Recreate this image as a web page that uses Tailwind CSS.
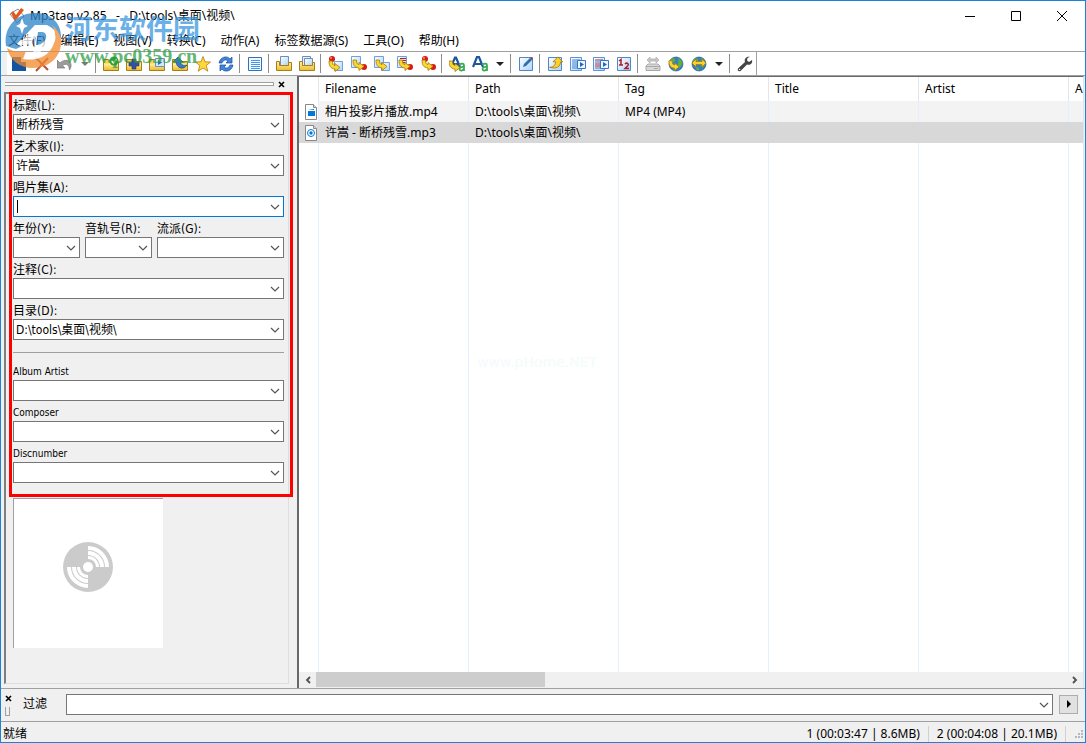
<!DOCTYPE html>
<html lang="zh-CN">
<head>
<meta charset="utf-8">
<title>Mp3tag v2.85</title>
<script src="https://cdn.jsdelivr.net/npm/@tailwindcss/browser@4"></script>
</head>
<body class="h-screen overflow-hidden bg-white font-['Noto_Sans','Noto_Sans_CJK_SC',sans-serif] text-xs text-black">
<svg class="absolute h-0 w-0" aria-hidden="true">
  <defs>
    <linearGradient id="gold" x1="0" y1="0" x2="0" y2="1"><stop offset="0" stop-color="#fff2ac"/><stop offset="1" stop-color="#edbd2c"/></linearGradient>
    <linearGradient id="page" x1="0" y1="0" x2="1" y2="1"><stop offset="0" stop-color="#fff"/><stop offset="1" stop-color="#aed3f8"/></linearGradient>
    <symbol id="chev" viewBox="0 0 10 6"><path d="M1 1l4 4 4-4" fill="none" stroke="#555" stroke-width="1.2"/></symbol>
    <symbol id="folder" viewBox="0 0 16 16"><path d="M.5 14.500V3.500h5l1.500 2h8.500v9z" fill="#f3cf4c" stroke="#a77e12"/><path d="M1 14V7.500h14V14z" fill="url(#gold)"/></symbol>
    <symbol id="doc" viewBox="0 0 16 16"><path d="M1.500 .5h9v11h-9z" fill="url(#page)" stroke="#6f9fdc"/></symbol>
    <symbol id="sheet" viewBox="0 0 16 16"><path d="M1.500 1.500h13v13h-13z" fill="url(#page)" stroke="#4d87cf"/></symbol>
    <symbol id="hook" viewBox="0 0 16 16"><path d="M1 4c0 5 1.500 7.500 6 8v2.500L12 10.500 7 6.500v2C5 8.300 4.500 7 4.500 4z" fill="#fbd62e" stroke="#a57908" stroke-width=".8"/></symbol>
    <symbol id="dot" viewBox="0 0 16 16"><circle cx="8" cy="8" r="3" fill="#d81a10"/><circle cx="7" cy="7" r="1" fill="#f58a7c"/></symbol>
    <symbol id="globe" viewBox="0 0 16 16"><circle cx="8" cy="8" r="7" fill="#347fc8" stroke="#1a4b86" stroke-width=".6"/><path d="M3 3c3-2 5 0 4 2s-3 1-4 4c-2-1-1.500-4 0-6zM10 2c3 1 4 3 4.500 6l-3 4-2-3 1-3zM5 11l3 1v2.500c-2 0-3-1-3-3.500z" fill="#5eaf3d"/></symbol>
    <symbol id="file" viewBox="0 0 12 16"><path d="M.5.5h8l3 3v12H.5z" fill="#fff" stroke="#888"/><path d="M8.500.5v3h3" fill="#ddd" stroke="#888"/></symbol>
    <symbol id="drop" viewBox="0 0 8 4"><path d="M0 0h8L4 4z" fill="#222"/></symbol>
  </defs>
</svg>

<div class="relative flex h-full flex-col border border-[#1883d7]">
  <header class="flex h-[29px] shrink-0 items-center pl-2">
    <svg class="h-4 w-4" viewBox="0 0 16 16"><path d="M1 6l7 9 7-7-6-7z" fill="#fff" stroke="#888"/><path d="M2 5l4 8L15 2l-3-2-5 7-3-4z" fill="#e4571c"/></svg>
    <h1 class="ml-[5px] flex-1 whitespace-pre">Mp3tag v2.85   -   D:\tools\桌面\视频\</h1>
    <button aria-label="最小化" class="flex h-full w-[46px] items-center justify-center"><svg class="h-3 w-3" viewBox="0 0 12 12"><path d="M1 6.500h10" stroke="#000"/></svg></button>
    <button aria-label="最大化" class="flex h-full w-[46px] items-center justify-center"><svg class="h-3 w-3" viewBox="0 0 12 12"><path d="M1.500 1.500h9v9h-9z" fill="none" stroke="#000"/></svg></button>
    <button aria-label="关闭" class="flex h-full w-[46px] items-center justify-center"><svg class="h-3 w-3" viewBox="0 0 12 12"><path d="M1 1l10 10M11 1L1 11" stroke="#000"/></svg></button>
  </header>
  <nav class="flex h-[21px] shrink-0 items-center gap-[15px] pl-[7px]">
    <button>文件(F)</button><button>编辑(E)</button><button>视图(V)</button><button>转换(C)</button><button>动作(A)</button><button>标签数据源(S)</button><button>工具(O)</button><button>帮助(H)</button>
  </nav>
  <div class="flex h-[25px] shrink-0 items-stretch border-y border-[#a0a0a0] [&>button]:flex [&>button]:w-[23px] [&>button]:items-center [&>button]:justify-center [&>i]:mx-[2px] [&>i]:my-[2px] [&>i]:w-[2px] [&>i]:border-l [&>i]:border-[#8d8d8d] [&_svg]:h-4 [&_svg]:w-4">
    <span class="w-[6px] bg-[#f0f0f0]"></span>
    <button aria-label="保存"><svg viewBox="0 0 16 16"><path d="M1 1h9v5h5v9H1z" fill="#1453a0"/></svg></button>
    <button aria-label="删除"><svg viewBox="0 0 16 16"><path d="M2 2l12 12M14 2L2 15" stroke="#b5523f" stroke-width="2"/></svg></button>
    <button aria-label="撤消"><svg viewBox="0 0 16 16"><path d="M0 4v8h8L5.500 9.500C9 7 12 8 12.500 14c5-8-3-13-9.500-7z" fill="#9b9b9b" stroke="#777" stroke-width=".7"/></svg></button>
    <button aria-label="撤消列表" class="!w-[17px]"><svg class="!h-1 !w-2 opacity-60"><use href="#drop"/></svg></button><i></i>
    <button aria-label="更改目录"><svg viewBox="0 0 16 16"><use href="#folder"/><circle cx="11" cy="5" r="4.500" fill="#2aa52e"/><path d="M8.500 5l2 2 3-4" fill="none" stroke="#fff" stroke-width="1.500"/></svg></button>
    <button aria-label="添加目录"><svg viewBox="0 0 16 16"><use href="#folder"/><path d="M6 3h4v3h3v4h-3v3H6v-3H3V6h3z" fill="#37509b" stroke="#23346b" stroke-width=".6"/></svg></button>
    <button aria-label="收藏目录"><svg viewBox="0 0 16 16"><use href="#folder"/><path d="M6.500 2.500h9v8h-9z" fill="#d3e7fc" stroke="#5e92d2"/><path d="M9 4l4 2.500L9 9z" fill="#2669bc"/></svg></button>
    <button aria-label="上级目录"><svg viewBox="0 0 16 16"><use href="#folder"/><path d="M6 1l5 5H8.500c.5 3 3 4 6.500 3-3 5-10 4-11-3H1z" fill="#3878c9" stroke="#1a4788" stroke-width=".7"/></svg></button>
    <button aria-label="收藏"><svg viewBox="0 0 16 16"><path d="M8 .5l2 5.300 5.500.2-4.300 3.600 1.600 5.600L8 12l-4.800 3.200 1.600-5.600L.5 6l5.500-.2z" fill="#ffd839" stroke="#b17a10" stroke-width=".8"/></svg></button>
    <button aria-label="刷新"><svg viewBox="0 0 16 16"><path d="M1 7c1-6 8-8 11-4l2-2v6H8l2-2C8 3 5 4 4 7zM15 9c-1 6-8 8-11 4l-2 2V9h6l-2 2c2 2 5 1 6-2z" fill="#3f86dc" stroke="#174e9b" stroke-width=".7"/></svg></button><i></i>
    <button aria-label="扩展标签"><svg viewBox="0 0 16 16"><path d="M1.500 1.500h13v13h-13z" fill="#f0f7ff" stroke="#2c73c4"/><path d="M4 4.500h9M4 6.500h9M4 8.500h9M4 10.500h9M4 12.500h9" stroke="#4795e8"/></svg></button><i></i>
    <button aria-label="打开文件"><svg viewBox="0 0 16 16"><path d="M4.500.5h8v9h-8z" fill="url(#page)" stroke="#6f8db8"/><path d="M.5 5.500h3v4h9v-3h3v8H.5z" fill="url(#gold)" stroke="#a77e12"/></svg></button>
    <button aria-label="打开播放列表"><svg viewBox="0 0 16 16"><path d="M3.500.5h8v9h-8z" fill="#e8f2fe" stroke="#6f8db8"/><path d="M5.500 2.500h8v7h-8z" fill="url(#page)" stroke="#6f8db8"/><path d="M.5 5.500h3v4h10v-3h2v8H.5z" fill="url(#gold)" stroke="#a77e12"/></svg></button><i></i>
    <button aria-label="标签到文件名"><svg viewBox="0 0 16 16"><path d="M6.500 5.500h8v9h-8z" fill="url(#page)" stroke="#6f9fdc"/><use href="#dot" x="-4" y="-5" width="16" height="16"/><use href="#hook" y="1" width="16" height="16"/></svg></button>
    <button aria-label="文件名到标签"><svg viewBox="0 0 16 16"><use href="#doc" x="-1"/><use href="#dot" x="5" y="3" width="16" height="16"/><use href="#hook" x="1" width="16" height="16"/></svg></button>
    <button aria-label="文件名到文件名"><svg viewBox="0 0 16 16"><use href="#doc" x="-1"/><path d="M7.500 6.500h8v8h-8z" fill="url(#page)" stroke="#6f9fdc"/><use href="#hook" x="1" width="16" height="16"/></svg></button>
    <button aria-label="文本文件到标签"><svg viewBox="0 0 16 16"><use href="#doc" x="-1"/><path d="M3 2.500h6M3 4.500h6M3 6.500h5" stroke="#b52020"/><use href="#dot" x="5" y="3" width="16" height="16"/><use href="#hook" x="1" width="16" height="16"/></svg></button>
    <button aria-label="标签到标签"><svg viewBox="0 0 16 16"><use href="#dot" x="-3" y="-5" width="16" height="16"/><use href="#dot" x="5" y="3" width="16" height="16"/><use href="#hook" x="1" width="16" height="16"/></svg></button><i></i>
    <button aria-label="动作"><svg viewBox="0 0 16 16"><path d="M2 11L6 1.500h1L11 11M4 8h5" fill="none" stroke="#1e559f" stroke-width="2.200"/><path d="M10 8.500q5-2 5 1V15M15 11c-5-1-6 4-2 3.500l2-1.500" fill="none" stroke="#35ad54" stroke-width="1.800"/><use href="#hook" x="-1" y="1" width="16" height="16"/></svg></button>
    <button aria-label="快速动作"><svg viewBox="0 0 16 16"><path d="M1 11L5 1h2l4 10M3 8h6" fill="none" stroke="#1e559f" stroke-width="2.200"/><path d="M10 8.500q5-2 5 1V15M15 11c-5-1-6 4-2 3.500l2-1.500" fill="none" stroke="#35ad54" stroke-width="1.800"/></svg></button>
    <button aria-label="动作列表" class="!w-[17px]"><svg class="!h-1 !w-2"><use href="#drop"/></svg></button><i></i>
    <button aria-label="编辑标签"><svg viewBox="0 0 16 16"><use href="#sheet"/><path d="M5 11l1-3 6-6 2 2-6 6z" fill="#2b6fb7"/><path d="M12 2l1-1 2 2-1 1z" fill="#b82b2b"/></svg></button><i></i>
    <button aria-label="导出"><svg viewBox="0 0 16 16"><use href="#sheet"/><path d="M11 .8l4.700 5H13.500c0 5-4 7.500-11 5.500 4 0 6-2 6-5.500H6z" fill="#fbd02b" stroke="#a57908" stroke-width=".8"/></svg></button>
    <button aria-label="创建播放列表"><svg viewBox="0 0 16 16"><path d="M.5 1.500h11v13H.5z" fill="url(#page)" stroke="#5b94da"/><path d="M2 4h8M2 6h8M2 8h8M2 10h8M2 12h8" stroke="#4284d1"/><path d="M7.500 4.500h8v8h-8z" fill="#eef6ff" stroke="#3976c4"/><path d="M10 6l4 2.500-4 2.500z" fill="#2669bc"/></svg></button>
    <button aria-label="所选文件播放列表"><svg viewBox="0 0 16 16"><path d="M.5 1.500h11v13H.5z" fill="url(#page)" stroke="#5b94da"/><path d="M2 4h8M2 8h8M2 10h8" stroke="#b92d36"/><path d="M2 6h8M2 12h8" stroke="#4284d1"/><path d="M7.500 4.500h8v8h-8z" fill="#eef6ff" stroke="#3976c4"/><path d="M10 6l4 2.500-4 2.500z" fill="#2669bc"/></svg></button>
    <button aria-label="自动编号"><svg viewBox="0 0 16 16"><use href="#sheet"/><path d="M3 5l2-1.500V9M3 9h4" fill="none" stroke="#ae1b25" stroke-width="1.500"/><path d="M9 8c2-2 4 0 3 1.500L9 12.500h4" fill="none" stroke="#ae1b25" stroke-width="1.500"/></svg></button><i></i>
    <button aria-label="光盘识别"><svg viewBox="0 0 16 16"><path d="M1 10l2-2h10l2 2v4.500H1z" fill="#d8d8d8" stroke="#a8a8a8"/><path d="M1 10.500h14M9 12.500h4" stroke="#a8a8a8"/><path d="M2 4l3-3v2h6V1l3 3-3 3V5H5v2z" fill="#c8c8c8" stroke="#aaa" stroke-width=".7"/></svg></button>
    <button aria-label="网络标签源"><svg viewBox="0 0 16 16"><use href="#globe"/><use href="#hook" x="0" y="1" width="15" height="15"/></svg></button>
    <button aria-label="标签源"><svg viewBox="0 0 16 16"><use href="#globe"/><path d="M1 7l4-4v2.500h6V3l4 4-4 4V8.500H5V11z" fill="#fbd02b" stroke="#a57908" stroke-width=".7"/></svg></button>
    <button aria-label="标签源列表" class="!w-[17px]"><svg class="!h-1 !w-2"><use href="#drop"/></svg></button><i></i>
    <button aria-label="选项"><svg viewBox="0 0 16 16"><path d="M15 4l-3 2-2-1.500.5-2.500L13 .8C9 0 7 3 8 6l-7 6.500c-1 2 1 3.500 2.500 2.500L10 8.500c3 1 6-1 5-4.500z" fill="#444"/><circle cx="2.600" cy="13.400" r=".7" fill="#fff"/></svg></button>
    <span class="border-l border-[#a0a0a0]"></span>
  </div>

  <main class="flex min-h-0 flex-1 bg-[#f0f0f0]">
    <aside class="flex w-[296px] shrink-0 flex-col pl-[3px] pr-2">
      <div class="flex h-4 shrink-0 items-center">
        <span class="ml-px h-1 flex-1 border-y border-r border-[#a0a0a0] bg-white"></span>
        <button aria-label="关闭面板" class="flex h-3 w-[15px] items-center justify-center"><svg class="h-[7px] w-[7px]" viewBox="0 0 7 7"><path d="M1 1l5 5M6 1L1 6" stroke="#000" stroke-width="1.600"/></svg></button>
      </div>
      <form class="relative mb-1 flex-1 border-2 border-b border-r border-[#808080] border-b-[#dedede] border-r-[#dedede] pl-[7px] pr-1 font-['DejaVu_Sans_Condensed','Noto_Sans_CJK_SC',sans-serif] text-xs [&_label]:block [&_label]:h-5 [&_label]:whitespace-nowrap [&_label]:pt-1 [&_label]:leading-4 [&_select]:block [&_select]:h-[21px] [&_select]:w-full [&_select]:appearance-none [&_select]:border [&_select]:border-[#767676] [&_select]:bg-white [&_select]:pl-[2px] [&_svg]:pointer-events-none">
        <label for="t">标题(L):</label>
        <div class="relative"><select id="t"><option>断桥残雪</option></select><svg class="absolute right-1 top-2 h-[6px] w-[10px]"><use href="#chev"/></svg></div>
        <label for="ar">艺术家(I):</label>
        <div class="relative"><select id="ar"><option>许嵩</option></select><svg class="absolute right-1 top-2 h-[6px] w-[10px]"><use href="#chev"/></svg></div>
        <label for="al">唱片集(A):</label>
        <div class="relative"><select id="al" class="!border-[#0078d7]"><option></option></select><span class="absolute left-1 top-1 h-[13px] w-px bg-black"></span><svg class="absolute right-1 top-2 h-[6px] w-[10px]"><use href="#chev"/></svg></div>
        <div class="grid grid-cols-[67px_67px_1fr] gap-x-[5px]">
          <div><label for="y">年份(Y):</label><div class="relative"><select id="y"><option></option></select><svg class="absolute right-1 top-2 h-[6px] w-[10px]"><use href="#chev"/></svg></div></div>
          <div><label for="tr">音轨号(R):</label><div class="relative"><select id="tr"><option></option></select><svg class="absolute right-1 top-2 h-[6px] w-[10px]"><use href="#chev"/></svg></div></div>
          <div><label for="g">流派(G):</label><div class="relative"><select id="g"><option></option></select><svg class="absolute right-1 top-2 h-[6px] w-[10px]"><use href="#chev"/></svg></div></div>
        </div>
        <label for="c">注释(C):</label>
        <div class="relative"><select id="c"><option></option></select><svg class="absolute right-1 top-2 h-[6px] w-[10px]"><use href="#chev"/></svg></div>
        <label for="d">目录(D):</label>
        <div class="relative"><select id="d"><option>D:\tools\桌面\视频\</option></select><svg class="absolute right-1 top-2 h-[6px] w-[10px]"><use href="#chev"/></svg></div>
        <hr class="mb-[7px] mt-3 border-[#a0a0a0]">
        <label for="aa" class="text-[10px]">Album Artist</label>
        <div class="relative"><select id="aa"><option></option></select><svg class="absolute right-1 top-2 h-[6px] w-[10px]"><use href="#chev"/></svg></div>
        <label for="co" class="text-[10px]">Composer</label>
        <div class="relative"><select id="co"><option></option></select><svg class="absolute right-1 top-2 h-[6px] w-[10px]"><use href="#chev"/></svg></div>
        <label for="di" class="text-[10px]">Discnumber</label>
        <div class="relative"><select id="di"><option></option></select><svg class="absolute right-1 top-2 h-[6px] w-[10px]"><use href="#chev"/></svg></div>
        <div class="mt-[15px] flex h-[150px] w-[150px] items-center justify-center border-l border-t border-[#a0a0a0] bg-white">
          <svg class="mb-[14px] mr-[2px] h-[52px] w-[52px]" viewBox="0 0 52 52"><circle cx="26" cy="26" r="25" fill="#cbcbcb"/><g fill="none" stroke="#fff" stroke-width="4"><path d="M26 7a19 19 0 0 1 19 19M26 12a14 14 0 0 1 14 14M26 17a9 9 0 0 1 9 9M26 45A19 19 0 0 1 7 26M26 40a14 14 0 0 1-14-14M26 35a9 9 0 0 1-9-9"/></g><circle cx="26" cy="26" r="8" fill="#cbcbcb"/><circle cx="26" cy="26" r="5" fill="#fff"/></svg>
        </div>
        <div class="pointer-events-none absolute -right-[5px] -top-[2px] left-[3px] h-[405px] border-[3px] border-[#f00]"></div>
      </form>
    </aside>

    <section class="relative mr-px flex min-w-0 flex-1 flex-col border-l-2 border-r border-t border-[#696969] border-r-[#e3e3e3] bg-white">
      <div class="min-h-0 flex-1 overflow-hidden">
        <table class="h-full w-full table-fixed border-separate border-spacing-0 text-left whitespace-nowrap [&_td]:overflow-hidden [&_td]:p-0 [&_td]:pl-[6px] [&_th]:overflow-hidden [&_th]:border-r [&_th]:border-[#e5e5e5] [&_th]:p-0 [&_th]:pl-[6px] [&_th]:font-normal [&_th:last-child]:border-0">
          <colgroup><col class="w-5"><col class="w-[150px]"><col class="w-[150px]"><col class="w-[150px]"><col class="w-[150px]"><col class="w-[150px]"><col></colgroup>
          <thead><tr class="h-6"><th></th><th>Filename</th><th>Path</th><th>Tag</th><th>Title</th><th>Artist</th><th>A</th></tr></thead>
          <tbody>
            <tr class="h-[21px] bg-[#f3f3f3] [&>td]:border-r [&>td]:border-[#e3efff]"><td class="bg-white"><svg class="h-4 w-3" viewBox="0 0 12 16"><use href="#file"/><path d="M3 7h7v5H3zM3 6l6-1v1z" fill="#0078d7"/></svg></td><td>相片投影片播放.mp4</td><td>D:\tools\桌面\视频\</td><td>MP4 (MP4)</td><td></td><td></td><td class="!border-0"></td></tr>
            <tr class="h-[21px] bg-[#d8d8d8]"><td><svg class="h-4 w-3" viewBox="0 0 12 16"><use href="#file"/><circle cx="6" cy="8" r="3.500" fill="none" stroke="#0078d7"/><circle cx="6" cy="8" r="1.700" fill="#0078d7"/></svg></td><td>许嵩 - 断桥残雪.mp3</td><td>D:\tools\桌面\视频\</td><td></td><td></td><td></td><td></td></tr>
            <tr class="[&>td]:border-r [&>td]:border-[#e3efff]"><td></td><td></td><td></td><td></td><td></td><td></td><td class="!border-0"></td></tr>
          </tbody>
        </table>
      </div>
      <span class="pointer-events-none absolute left-[178px] top-[276px] font-['DejaVu_Sans',sans-serif] text-[14px] text-[#f3fbfb]">www.pHome.NET</span>
      <div class="flex h-4 shrink-0 items-center bg-[#f0f0f0]">
        <button aria-label="向左滚动" class="flex w-[17px] items-center justify-center"><svg class="h-[8px] w-[6px]" viewBox="0 0 6 8"><path d="M5 1L2 4l3 3" fill="none" stroke="#505050" stroke-width="1.800"/></svg></button>
        <span class="h-full flex-1"><span class="block h-[15px] w-[30.500%] bg-[#cdcdcd]"></span></span>
        <button aria-label="向右滚动" class="flex w-4 items-center justify-center"><svg class="h-[8px] w-[6px]" viewBox="0 0 6 8"><path d="M1 1l3 3-3 3" fill="none" stroke="#505050" stroke-width="1.800"/></svg></button>
      </div>
    </section>
  </main>

  <div class="flex h-[33px] shrink-0 items-center border-t border-[#a0a0a0] bg-[#f0f0f0] pb-[2px] pr-[7px]">
    <div class="flex w-[22px] flex-col items-start gap-[5px] pl-1 pt-[2px]">
      <button aria-label="关闭过滤器"><svg class="block h-[7px] w-[7px]" viewBox="0 0 7 7"><path d="M1 1l5 5M6 1L1 6" stroke="#000" stroke-width="1.600"/></svg></button>
      <span class="h-[9px] w-[5px] border-x border-b border-[#a0a0a0]"></span>
    </div>
    <label for="f" class="w-[43px]">过滤</label>
    <div class="relative mr-[6px] flex-1"><select id="f" class="block h-[21px] w-full appearance-none border border-[#767676] bg-white"><option></option></select><svg class="pointer-events-none absolute right-1 top-2 h-[6px] w-[10px]"><use href="#chev"/></svg></div>
    <button aria-label="过滤选项" class="flex h-[19px] w-[19px] items-center justify-center border border-[#adadad] bg-[#e1e1e1]"><svg class="h-[8px] w-1" viewBox="0 0 4 8"><path d="M0 0l4 4-4 4z"/></svg></button>
  </div>
  <footer class="flex h-[21px] shrink-0 items-center border-t border-[#a0a0a0] bg-[#f0f0f0] pl-[2px] pt-[3px]">
    <span class="flex-1">就绪</span>
    <span class="border-r border-[#d0d0d0] pr-2 leading-4">1 (00:03:47 | 8.6MB)</span>
    <span class="border-r border-[#d0d0d0] pl-2 pr-2 leading-4">2 (00:04:08 | 20.1MB)</span>
    <svg class="ml-[9px] h-3 w-[10px]" viewBox="0 0 10 12" fill="#b8b8b8"><path d="M6 2h2v2H6zM3 5h2v2H3zM6 5h2v2H6zM0 8h2v2H0zM3 8h2v2H3zM6 8h2v2H6z"/></svg>
  </footer>

  <div class="pointer-events-none absolute left-[3px] top-[9px] flex items-start">
    <svg class="h-[60px] w-[60px] opacity-75" viewBox="0 0 60 60"><path d="M2 36C-1 16 14 3 31 3c17 0 27 11 26 26-3-6-8-11-14-14H31L12 35l6 1-6 3c-4-1-7-2-10-3z" fill="#2c83c9"/><path d="M31 20h11c8 2 9 14-5 19l-7 1z" fill="#2c83c9"/><path d="M3 38c7 4 13 5 19 3l-3 8c16 3 32-5 32-24 0-4-1-7-3-10 5 4 8 9 9 15 1 17-12 28-28 28C15 58 6 50 3 38z" fill="#f28a2e"/><path d="M12 16l4-2 2-6 2 6 4 2-4 2-2 6-2-6z" fill="#fff"/><path d="M13 35l20-19h8c13 2 15 19 0 24l-4 1-3 8h-6l4-22-9 8zM34 22l-2 13c10 0 14-12 6-13z" fill="#fff" fill-rule="evenodd"/></svg>
    <div class="ml-px pt-[2px] font-bold opacity-75">
      <div class="text-[27px] leading-[34px] text-[#3a98e0]">河东软件园</div>
      <div class="font-['Liberation_Serif',serif] text-[20px] leading-[20px] text-[#2f9e47]">www.pc0359.cn</div>
    </div>
  </div>
</div>
</body>
</html>
